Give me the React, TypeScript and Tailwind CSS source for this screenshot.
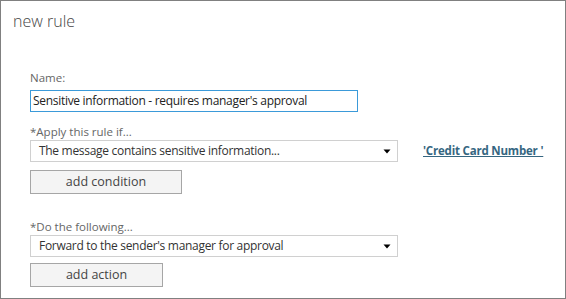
const FONT = "font-['Open_Sans','Noto_Sans',sans-serif]"

function Caret() {
  return (
    <svg width="8" height="5" viewBox="0 0 8 5" className="shrink-0">
      <path d="M0.5 0.5h7L4 4.5z" fill="#000" />
    </svg>
  )
}

function Dropdown({ label }: { label: string }) {
  return (
    <div className="flex h-[22px] w-[368px] items-center justify-between border border-[#d0d0d0] bg-white pl-[8px] pr-[6px] text-[12px] tracking-[-0.3px] text-[#333]">
      <span>{label}</span>
      <Caret />
    </div>
  )
}

function GrayButton({ label, width }: { label: string; width: string }) {
  return (
    <button
      type="button"
      className={`flex h-[24px] items-center justify-center border border-[#a6a6a6] bg-[#f4f4f4] text-[12.5px] text-[#444] ${width}`}
    >
      {label}
    </button>
  )
}

export default function App() {
  return (
    <div className={`h-[299px] w-[566px] border border-[#808080] bg-white ${FONT}`}>
      <h1 className="pl-[12px] pt-[8px] text-[16px] font-light leading-[24px] text-[#444]">
        new rule
      </h1>

      <div className="pl-[29px] pt-[37px]">
        <p className="text-[11.5px] leading-[16px] text-[#666]">Name:</p>
        <div className="mt-[4px] flex h-[22px] w-[328px] items-center border border-[#3b9ad9] pl-[2px] text-[12px] tracking-[-0.3px] text-[#222]">
          Sensitive information - requires manager's approval
        </div>

        <p className="mt-[12px] text-[11.5px] leading-[16px] text-[#666]">*Apply this rule if...</p>
        <div className="flex items-center">
          <Dropdown label="The message contains sensitive information..." />
          <a
            href="#"
            className="ml-[25px] text-[11.5px] font-bold tracking-[-0.2px] text-[#356681] underline"
          >
            'Credit Card Number '
          </a>
        </div>
        <div className="mt-[8px]">
          <GrayButton label="add condition" width="w-[152px]" />
        </div>

        <p className="mt-[25px] text-[11.5px] leading-[16px] text-[#666]">*Do the following...</p>
        <div>
          <Dropdown label="Forward to the sender's manager for approval" />
        </div>
        <div className="mt-[6px]">
          <GrayButton label="add action" width="w-[133px]" />
        </div>
      </div>
    </div>
  )
}
